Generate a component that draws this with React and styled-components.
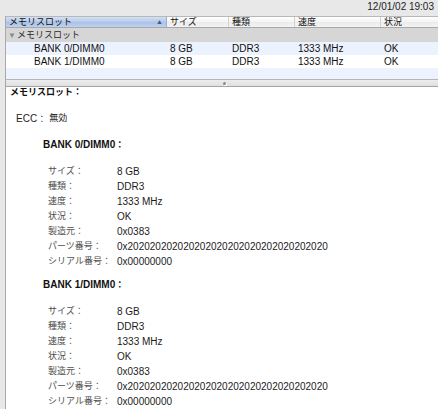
import React from "react";
import styled, { createGlobalStyle } from "styled-components";

const Global = createGlobalStyle`
  html, body { margin: 0; padding: 0; background: #e8e8e8; }
  body {
    font-family: "Liberation Sans", "Noto Sans CJK JP", sans-serif;
    font-size: 10px;
    color: #1a1a1a;
    -webkit-font-smoothing: antialiased;
  }
`;

const Window = styled.div`
  width: 438px;
  height: 409px;
  overflow: hidden;
  display: flex;
  flex-direction: column;
  background: #e8e8e8;
`;

const TopBar = styled.div`
  height: 16px;
  display: flex;
  justify-content: flex-end;
  align-items: center;
  padding-right: 4px;
  box-sizing: border-box;
`;

const Time = styled.span`
  font-size: 10px;
  line-height: 12px;
  color: #222;
  margin-top: -3px;
`;

const Main = styled.div`
  flex: 1;
  margin-left: 5px;
  border-left: 1px solid #a9a9a9;
  display: flex;
  flex-direction: column;
  min-height: 0;
`;

const Jp = styled.span`
  font-size: 9px;
  line-height: 9px;
`;

const COLS = "161px 62px 66px 86px 1fr";

const Table = styled.div`
  background: #fff;
  display: flex;
  flex-direction: column;
`;

const HeaderRow = styled.div`
  display: grid;
  grid-template-columns: ${COLS};
  height: 12px;
  box-sizing: border-box;
  border-top: 1px solid #b8b8b8;
  border-bottom: 1px solid #a8a8a8;
`;

const HeaderCell = styled.div`
  display: flex;
  align-items: center;
  justify-content: space-between;
  padding: 0 3px;
  line-height: 10px;
  box-sizing: border-box;
  color: #111;
  border-right: 1px solid ${(p) => (p.$selected ? "#9bb0d2" : "#d0d0d0")};
  background: ${(p) =>
    p.$selected
      ? "linear-gradient(#d3e0f3, #b4c9ea 50%, #a9c1e8 51%, #bed1ef)"
      : "linear-gradient(#ffffff, #f3f3f3 50%, #ebebeb 51%, #f4f4f4)"};
  &:last-child { border-right: none; }
`;

const SortArrow = styled.span`
  font-size: 7px;
  color: #4c5a70;
  line-height: 10px;
`;

const GroupRow = styled.div`
  height: 14px;
  background: #d6d6d6;
  display: flex;
  align-items: center;
  padding-left: 2px;
  color: #2a2a2a;
`;

const Disclosure = styled.span`
  font-size: 8px;
  color: #8a8a8a;
  margin-right: 1px;
`;

const DataRow = styled.div`
  display: grid;
  grid-template-columns: ${COLS};
  height: ${(p) => p.$h || 13}px;
  align-items: center;
  background: ${(p) => (p.$alt ? "#edf3fe" : "#ffffff")};
`;

const Cell = styled.div`
  padding-left: ${(p) => p.$indent || 3}px;
  white-space: nowrap;
  color: #111;
`;

const Splitter = styled.div`
  height: 7px;
  border-top: 1px solid #b5b5b5;
  border-bottom: 1px solid #a5a5a5;
  background: linear-gradient(#ececec, #e0e0e0);
  display: flex;
  justify-content: center;
  align-items: center;
  padding-left: 4px;
`;

const Dimple = styled.div`
  width: 3px;
  height: 3px;
  border-radius: 50%;
  background: #8c8c8c;
  box-shadow: 1px 1px 0 #fff;
`;

const Detail = styled.div`
  flex: 1;
  background: #fff;
  padding-left: 4px;
  display: flex;
  flex-direction: column;
`;

const Title = styled.div`
  font-weight: bold;
  font-size: 9px;
  line-height: 11px;
  color: #111;
`;

const EccRow = styled.div`
  margin: 13px 0 0 6px;
  height: 15px;
  line-height: 15px;
  display: flex;
  align-items: center;
  gap: 3px;
  color: #222;
`;

const Section = styled.div`
  margin: ${(p) => (p.$first ? 11 : 8)}px 0 0 33px;
  display: flex;
  flex-direction: column;
`;

const SectionHead = styled.div`
  font-weight: bold;
  height: 15px;
  line-height: 15px;
  color: #111;
`;

const Props = styled.div`
  margin: 12px 0 0 5px;
  display: flex;
  flex-direction: column;
`;

const Prop = styled.div`
  display: flex;
  align-items: center;
  height: 15px;
  line-height: 15px;
  white-space: nowrap;
`;

const Label = styled.span`
  width: 69px;
  font-size: 9px;
  color: #4e4e4e;
`;

const Value = styled.span`
  color: #1c1c1c;
`;

const props = [
  ["サイズ：", "8 GB"],
  ["種類：", "DDR3"],
  ["速度：", "1333 MHz"],
  ["状況：", "OK"],
  ["製造元：", "0x0383"],
  ["パーツ番号：", "0x202020202020202020202020202020202020"],
  ["シリアル番号：", "0x00000000"],
];

const rows = [
  ["BANK 0/DIMM0", "8 GB", "DDR3", "1333 MHz", "OK"],
  ["BANK 1/DIMM0", "8 GB", "DDR3", "1333 MHz", "OK"],
];

export default function App() {
  return (
    <>
      <Global />
      <Window>
        <TopBar>
          <Time>12/01/02 19:03</Time>
        </TopBar>
        <Main>
          <Table>
            <HeaderRow>
              <HeaderCell $selected>
                <Jp>メモリスロット</Jp>
                <SortArrow>▲</SortArrow>
              </HeaderCell>
              <HeaderCell><Jp>サイズ</Jp></HeaderCell>
              <HeaderCell><Jp>種類</Jp></HeaderCell>
              <HeaderCell><Jp>速度</Jp></HeaderCell>
              <HeaderCell><Jp>状況</Jp></HeaderCell>
            </HeaderRow>
            <GroupRow>
              <Disclosure>▼</Disclosure>
              <Jp>メモリスロット</Jp>
            </GroupRow>
            {rows.map((r, i) => (
              <DataRow key={i} $alt={i % 2 === 0}>
                <Cell $indent={28}>{r[0]}</Cell>
                <Cell>{r[1]}</Cell>
                <Cell>{r[2]}</Cell>
                <Cell>{r[3]}</Cell>
                <Cell>{r[4]}</Cell>
              </DataRow>
            ))}
            <DataRow $alt $h={11} />
          </Table>
          <Splitter>
            <Dimple />
          </Splitter>
          <Detail>
            <Title>メモリスロット：</Title>
            <EccRow>
              <span>ECC<Jp>：</Jp></span>
              <Jp>無効</Jp>
            </EccRow>
            {["BANK 0/DIMM0", "BANK 1/DIMM0"].map((h, i) => (
              <Section key={h} $first={i === 0}>
                <SectionHead>{h}<Jp>：</Jp></SectionHead>
                <Props>
                  {props.map(([l, v]) => (
                    <Prop key={l}>
                      <Label>{l}</Label>
                      <Value>{v}</Value>
                    </Prop>
                  ))}
                </Props>
              </Section>
            ))}
          </Detail>
        </Main>
      </Window>
    </>
  );
}
